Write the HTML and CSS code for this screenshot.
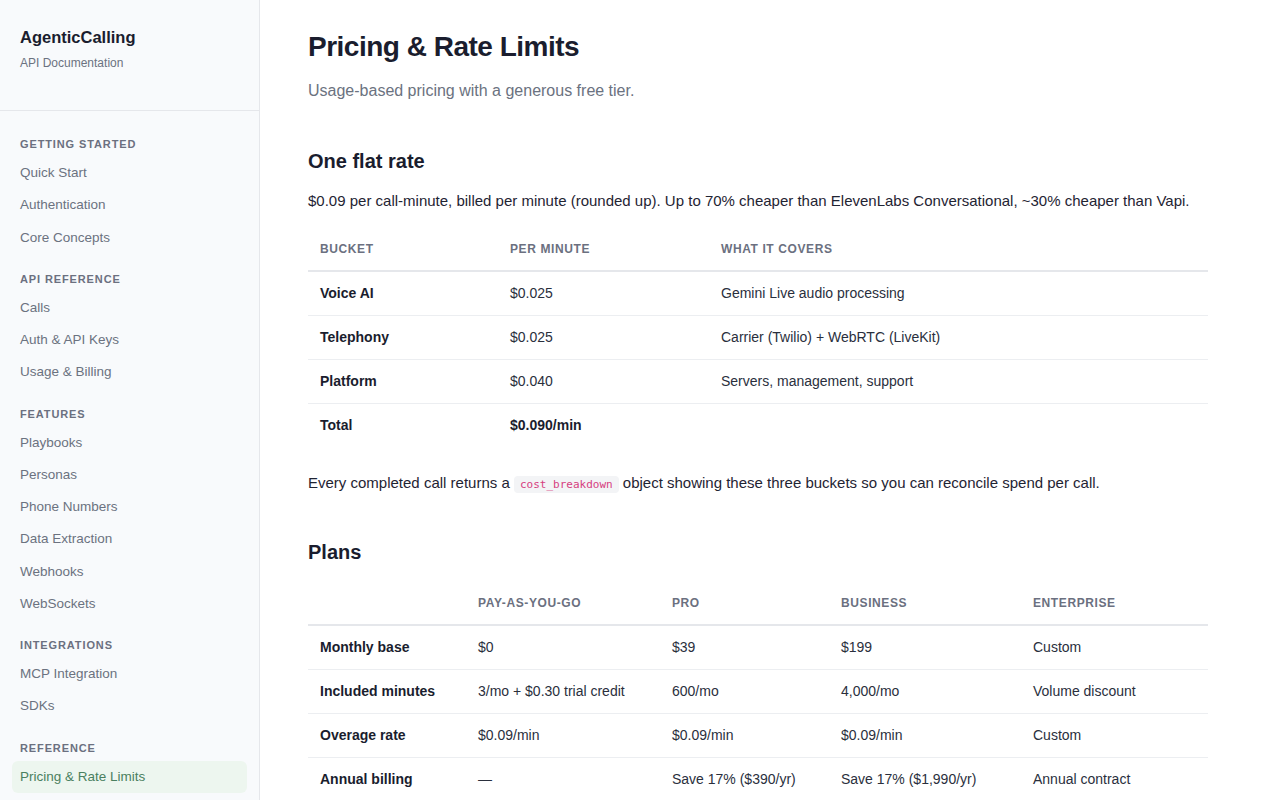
FILE: index.html
```html
<!DOCTYPE html>
<html lang="en">
<head>
  <meta charset="UTF-8" />
  <meta name="viewport" content="width=device-width, initial-scale=1.0" />
  <title>Pricing &amp; Rate Limits - AgenticCalling</title>
  <link rel="stylesheet" href="styles.css">
</head>
<body>
  <aside class="sidebar">
    <div class="brand">
      <div class="brand-name">AgenticCalling</div>
      <div class="brand-sub">API Documentation</div>
    </div>
    <nav class="nav">
      <div class="nav-section">
        <div class="nav-title">Getting Started</div>
        <a class="nav-link" href="#">Quick Start</a>
        <a class="nav-link" href="#">Authentication</a>
        <a class="nav-link" href="#">Core Concepts</a>
      </div>
      <div class="nav-section">
        <div class="nav-title">API Reference</div>
        <a class="nav-link" href="#">Calls</a>
        <a class="nav-link" href="#">Auth &amp; API Keys</a>
        <a class="nav-link" href="#">Usage &amp; Billing</a>
      </div>
      <div class="nav-section">
        <div class="nav-title">Features</div>
        <a class="nav-link" href="#">Playbooks</a>
        <a class="nav-link" href="#">Personas</a>
        <a class="nav-link" href="#">Phone Numbers</a>
        <a class="nav-link" href="#">Data Extraction</a>
        <a class="nav-link" href="#">Webhooks</a>
        <a class="nav-link" href="#">WebSockets</a>
      </div>
      <div class="nav-section">
        <div class="nav-title">Integrations</div>
        <a class="nav-link" href="#">MCP Integration</a>
        <a class="nav-link" href="#">SDKs</a>
      </div>
      <div class="nav-section">
        <div class="nav-title">Reference</div>
        <a class="nav-link active" href="#">Pricing &amp; Rate Limits</a>
      </div>
    </nav>
  </aside>

  <main class="content">
    <h1>Pricing &amp; Rate Limits</h1>
    <p class="lead">Usage-based pricing with a generous free tier.</p>

    <h2>One flat rate</h2>
    <p>$0.09 per call-minute, billed per minute (rounded up). Up to 70% cheaper than ElevenLabs Conversational, ~30% cheaper than Vapi.</p>

    <table class="table">
      <thead>
        <tr>
          <th style="width: 190px">Bucket</th>
          <th style="width: 211px">Per minute</th>
          <th>What it covers</th>
        </tr>
      </thead>
      <tbody>
        <tr><td><strong>Voice AI</strong></td><td>$0.025</td><td>Gemini Live audio processing</td></tr>
        <tr><td><strong>Telephony</strong></td><td>$0.025</td><td>Carrier (Twilio) + WebRTC (LiveKit)</td></tr>
        <tr><td><strong>Platform</strong></td><td>$0.040</td><td>Servers, management, support</td></tr>
        <tr><td><strong>Total</strong></td><td><strong>$0.090/min</strong></td><td></td></tr>
      </tbody>
    </table>

    <p>Every completed call returns a <code>cost_breakdown</code> object showing these three buckets so you can reconcile spend per call.</p>

    <h2>Plans</h2>
    <table class="table">
      <thead>
        <tr>
          <th style="width: 158px"></th>
          <th style="width: 194px">Pay-as-you-go</th>
          <th style="width: 169px">Pro</th>
          <th style="width: 192px">Business</th>
          <th>Enterprise</th>
        </tr>
      </thead>
      <tbody>
        <tr><td><strong>Monthly base</strong></td><td>$0</td><td>$39</td><td>$199</td><td>Custom</td></tr>
        <tr><td><strong>Included minutes</strong></td><td>3/mo + $0.30 trial credit</td><td>600/mo</td><td>4,000/mo</td><td>Volume discount</td></tr>
        <tr><td><strong>Overage rate</strong></td><td>$0.09/min</td><td>$0.09/min</td><td>$0.09/min</td><td>Custom</td></tr>
        <tr><td><strong>Annual billing</strong></td><td>&mdash;</td><td>Save 17% ($390/yr)</td><td>Save 17% ($1,990/yr)</td><td>Annual contract</td></tr>
        <tr><td><strong>Concurrent calls</strong></td><td>1</td><td>5</td><td>25</td><td>Custom</td></tr>
      </tbody>
    </table>
  </main>
</body>
</html>
```

FILE: styles.css
```css
* {
  box-sizing: border-box;
}

body {
  display: flex;
  margin: 0;
  font-family: "Liberation Sans", Arial, sans-serif;
  color: #1f2433;
  background-color: #fff;
}

/* sidebar */

.sidebar {
  flex: 0 0 260px;
  width: 260px;
  height: 100vh;
  position: sticky;
  top: 0;
  overflow-y: auto;
  background-color: #f8fafc;
  border-right: 1px solid #e5e7eb;
}

.brand {
  padding: 25px 20px 38px;
  border-bottom: 1px solid #e5e7eb;
}

.brand-name {
  font-size: 16.5px;
  line-height: 24px;
  font-weight: 700;
  color: #1a1d2e;
}

.brand-sub {
  margin-top: 5px;
  font-size: 12px;
  line-height: 18px;
  color: #6b7280;
}

.nav {
  padding: 25px 12px 24px;
}

.nav-section + .nav-section {
  margin-top: 17px;
}

.nav-title {
  padding: 0 8px;
  margin-bottom: 5px;
  font-size: 11px;
  line-height: 16px;
  font-weight: 700;
  letter-spacing: 0.08em;
  text-transform: uppercase;
  color: #6b7080;
}

.nav-link {
  display: block;
  padding: 6px 8px;
  font-size: 13.5px;
  line-height: 20.25px;
  color: #6b7280;
  text-decoration: none;
  border-radius: 6px;
}

.nav-link.active {
  background-color: #edf6ef;
  color: #4a8060;
}

/* main column */

.content {
  flex: 1;
  min-width: 0;
  padding: 30px 48px 48px;
}

.content > * {
  max-width: 900px;
}

h1 {
  margin: 0;
  font-size: 28px;
  line-height: 1.2;
  font-weight: 700;
  letter-spacing: -0.5px;
  color: #1a1d2e;
}

.lead {
  margin: 15px 0 45px;
  font-size: 16px;
  line-height: 24px;
  color: #6b7280;
}

h2 {
  margin: 42px 0 15px;
  font-size: 20px;
  line-height: 26px;
  font-weight: 700;
  color: #1a1d2e;
}

p {
  margin: 0 0 15px;
  font-size: 15px;
  line-height: 24px;
  color: #1f2433;
}

code {
  padding: 2px 6px;
  font-family: "DejaVu Sans Mono", monospace;
  font-size: 11px;
  color: #d6407f;
  background-color: #f3f4f6;
  border-radius: 4px;
}

.table {
  width: 100%;
  border-collapse: collapse;
  table-layout: fixed;
  margin-bottom: 24px;
}

h2 + .table {
  margin-top: 17px;
}

.table th {
  padding: 12px;
  font-size: 12px;
  line-height: 18px;
  font-weight: 700;
  letter-spacing: 0.05em;
  text-transform: uppercase;
  text-align: left;
  color: #6b7080;
  border-bottom: 2px solid #e5e7eb;
}

.table td {
  padding: 12px;
  font-size: 14px;
  line-height: 19px;
  color: #2a2f3d;
  border-bottom: 1px solid #eceef1;
}

.table tbody tr:last-child td {
  border-bottom: none;
}

.table td strong {
  color: #1a1d2e;
}
```
